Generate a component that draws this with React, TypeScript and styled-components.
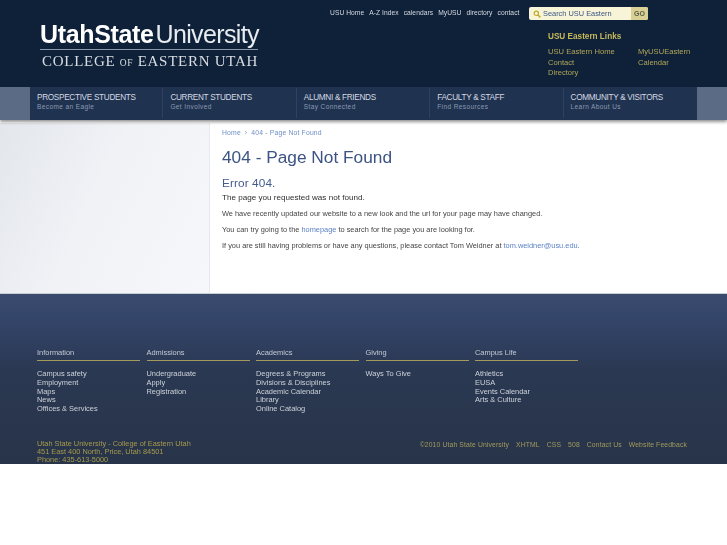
import React, { FC } from 'react';
import styled, { createGlobalStyle } from 'styled-components';

const GlobalStyle = createGlobalStyle`
  html, body { margin: 0; padding: 0; background: #fff; }
  body { font-family: "Liberation Sans", Arial, sans-serif; width: 727px; overflow: hidden; }
  #root { filter: blur(0.3px); }
  a { text-decoration: none; color: inherit; }
`;

const Header = styled.header`
  height: 87px;
  background: #0f2139;
  display: flex;
  justify-content: space-between;
`;
const Logo = styled.div`
  margin: 20px 0 0 40px;
  width: 218px;
  color: #fff;
`;
const LogoTop = styled.div`
  font-size: 25px;
  line-height: 28px;
  white-space: nowrap;
  b { font-weight: 700; letter-spacing: -0.35px; }
  span { font-weight: 400; letter-spacing: -0.65px; margin-left: 2px; color: #e8ebf0; }
`;
const LogoBottom = styled.div`
  border-top: 1px solid #8d99aa;
  margin-top: 1px;
  padding: 3px 0 0 2px;
  font-family: "Liberation Serif", serif;
  font-size: 15px;
  line-height: 17px;
  letter-spacing: 0.72px;
  color: #d9dde3;
  white-space: nowrap;
  small { font-size: 9.5px; letter-spacing: .6px; }
`;
const HeaderRight = styled.div`
  width: 397px;
  padding-top: 7px;
`;
const TopRow = styled.div`
  display: flex;
  align-items: flex-start;
`;
const TopLinks = styled.nav`
  display: flex;
  gap: 5px;
  width: 199px;
  margin-top: 1px;
  font-size: 6.7px;
  line-height: 9px;
  letter-spacing: .05px;
  color: #d4d9e0;
  white-space: nowrap;
`;
const SearchBox = styled.div`
  width: 119px;
  height: 13px;
  border-radius: 2px;
  background: #f7f4d8;
  display: flex;
  align-items: center;
  overflow: hidden;
`;
const SearchText = styled.span`
  flex: 1;
  display: flex;
  align-items: center;
  gap: 2px;
  padding-left: 4px;
  font-size: 7.4px;
  color: #3b5584;
  white-space: nowrap;
`;
const GoButton = styled.span`
  width: 17px;
  height: 13px;
  background: #d8d094;
  color: #5c5c48;
  font-size: 7px;
  font-weight: 700;
  line-height: 13px;
  text-align: center;
`;
const EasternLinks = styled.div`
  margin: 11px 0 0 218px;
  color: #b0a658;
  font-size: 7.6px;
`;
const EasternTitle = styled.div`
  font-size: 8.2px;
  font-weight: 700;
  line-height: 11px;
  color: #c7b95b;
  margin-bottom: 5px;
`;
const EasternGrid = styled.div`
  display: grid;
  grid-template-columns: 90px 60px;
  line-height: 10.7px;
  white-space: nowrap;
`;

const NavBand = styled.div`
  height: 33px;
  padding: 0 30px;
  background: #5b6b86;
  box-shadow: 0 2px 3px rgba(60, 60, 60, .55);
  position: relative;
`;
const NavInner = styled.nav`
  height: 33px;
  background: #1f3250;
  display: grid;
  grid-template-columns: repeat(5, 1fr);
`;
const NavItem = styled.a<{ $last?: boolean }>`
  padding: 4px 0 0 7px;
  border-right: ${p => (p.$last ? 'none' : '1px solid #2e4262')};
  margin: 1px 0 2px;
  white-space: nowrap;
`;
const NavTitle = styled.div`
  font-size: 8.2px;
  line-height: 11px;
  letter-spacing: -.3px;
  color: #d5dae2;
`;
const NavSub = styled.div`
  font-size: 6.5px;
  line-height: 8px;
  letter-spacing: .4px;
  color: #8c9ab0;
`;

const Content = styled.main`
  height: 173px;
  display: flex;
  background: #fff;
`;
const Sidebar = styled.aside`
  width: 209px;
  margin-top: 3px;
  border-right: 1px solid #e5e9f0;
  background: linear-gradient(115deg, #e3e6eb 0%, #f0f2f6 45%, #f5f7fa 100%);
`;
const Article = styled.article`
  padding: 8px 0 0 12px;
  flex: 1;
  color: #444;
  font-size: 7.4px;
  white-space: nowrap;
`;
const Crumbs = styled.div`
  font-size: 6.8px;
  line-height: 9px;
  letter-spacing: .18px;
  color: #6f8fc6;
  display: flex;
  gap: 4px;
`;
const PageTitle = styled.h1`
  margin: 10px 0 0;
  font-size: 17.3px;
  line-height: 21px;
  font-weight: 400;
  color: #3c5484;
`;
const ErrorTitle = styled.h2`
  margin: 8px 0 0;
  font-size: 11.8px;
  line-height: 14px;
  font-weight: 400;
  letter-spacing: .1px;
  color: #445c8a;
`;
const Lead = styled.p`
  margin: 2px 0 0;
  font-size: 8.1px;
  line-height: 11px;
  color: #2e2e2e;
`;
const Para = styled.p`
  margin: 5px 0 0;
  line-height: 11px;
  & + & { margin-top: 5px; }
`;
const TextLink = styled.a`
  color: #5c82c4;
`;

const Footer = styled.footer`
  height: 171px;
  padding: 53px 40px 0 37px;
  box-sizing: border-box;
  overflow: hidden;
  background: linear-gradient(#3a4b6e 0%, #34456a 14%, #2a3852 45%, #283449 100%);
  border-top: 1px solid #c9ced6;
`;
const Columns = styled.div`
  display: flex;
  gap: 6.5px;
  height: 93px;
`;
const Column = styled.div`
  width: 103px;
  font-size: 7.45px;
  line-height: 8.75px;
  color: #cdd2da;
  white-space: nowrap;
`;
const ColumnTitle = styled.div`
  height: 13px;
  border-bottom: 1px solid #a39a5c;
  margin-bottom: 9px;
  line-height: 11px;
  color: #c4c9d2;
`;
const ColumnLink = styled.a`
  display: block;
`;
const FooterBottom = styled.div`
  display: flex;
  justify-content: space-between;
  align-items: flex-start;
`;
const Address = styled.address`
  font-style: normal;
  font-size: 7.37px;
  line-height: 8px;
  color: #a79a4c;
  white-space: nowrap;
`;
const FooterLinks = styled.nav`
  display: flex;
  gap: 7px;
  font-size: 6.8px;
  line-height: 9px;
  letter-spacing: .13px;
  color: #a39b5c;
  white-space: nowrap;
`;

const SearchIcon: FC = () => (
  <svg width="8" height="8" viewBox="0 0 8 8" fill="none" stroke="#c4a92e">
    <circle cx="3.3" cy="3.3" r="2.2" strokeWidth="1.2" />
    <path d="M5 5l2.4 2.4" strokeWidth="1.5" />
  </svg>
);

const topLinks = ['USU Home', 'A-Z Index', 'calendars', 'MyUSU', 'directory', 'contact'];
const navItems = [
  ['PROSPECTIVE STUDENTS', 'Become an Eagle'],
  ['CURRENT STUDENTS', 'Get Involved'],
  ['ALUMNI & FRIENDS', 'Stay Connected'],
  ['FACULTY & STAFF', 'Find Resources'],
  ['COMMUNITY & VISITORS', 'Learn About Us'],
];
const columns: [string, string[]][] = [
  ['Information', ['Campus safety', 'Employment', 'Maps', 'News', 'Offices & Services']],
  ['Admissions', ['Undergraduate', 'Apply', 'Registration']],
  ['Academics', ['Degrees & Programs', 'Divisions & Disciplines', 'Academic Calendar', 'Library', 'Online Catalog']],
  ['Giving', ['Ways To Give']],
  ['Campus Life', ['Athletics', 'EUSA', 'Events Calendar', 'Arts & Culture']],
];
const footerLinks = ['©2010 Utah State University', 'XHTML', 'CSS', '508', 'Contact Us', 'Website Feedback'];

export default function App() {
  return (
    <>
      <GlobalStyle />
      <Header>
        <Logo>
          <LogoTop><b>UtahState</b><span>University</span></LogoTop>
          <LogoBottom>COLLEGE <small>OF</small> EASTERN UTAH</LogoBottom>
        </Logo>
        <HeaderRight>
          <TopRow>
            <TopLinks>
              {topLinks.map(l => <a key={l} href="#">{l}</a>)}
            </TopLinks>
            <SearchBox>
              <SearchText><SearchIcon />Search USU Eastern</SearchText>
              <GoButton>GO</GoButton>
            </SearchBox>
          </TopRow>
          <EasternLinks>
            <EasternTitle>USU Eastern Links</EasternTitle>
            <EasternGrid>
              <a href="#">USU Eastern Home</a>
              <a href="#">MyUSUEastern</a>
              <a href="#">Contact</a>
              <a href="#">Calendar</a>
              <a href="#">Directory</a>
            </EasternGrid>
          </EasternLinks>
        </HeaderRight>
      </Header>
      <NavBand>
        <NavInner>
          {navItems.map(([title, sub], i) => (
            <NavItem key={title} href="#" $last={i === navItems.length - 1}>
              <NavTitle>{title}</NavTitle>
              <NavSub>{sub}</NavSub>
            </NavItem>
          ))}
        </NavInner>
      </NavBand>
      <Content>
        <Sidebar />
        <Article>
          <Crumbs>
            <a href="#">Home</a><span>›</span><a href="#">404 - Page Not Found</a>
          </Crumbs>
          <PageTitle>404 - Page Not Found</PageTitle>
          <ErrorTitle>Error 404.</ErrorTitle>
          <Lead>The page you requested was not found.</Lead>
          <Para>We have recently updated our website to a new look and the url for your page may have changed.</Para>
          <Para>You can try going to the <TextLink href="#">homepage</TextLink> to search for the page you are looking for.</Para>
          <Para>If you are still having problems or have any questions, please contact Tom Weidner at <TextLink href="#">tom.weidner@usu.edu</TextLink>.</Para>
        </Article>
      </Content>
      <Footer>
        <Columns>
          {columns.map(([title, links]) => (
            <Column key={title}>
              <ColumnTitle>{title}</ColumnTitle>
              {links.map(l => <ColumnLink key={l} href="#">{l}</ColumnLink>)}
            </Column>
          ))}
        </Columns>
        <FooterBottom>
          <Address>
            Utah State University - College of Eastern Utah<br />
            451 East 400 North, Price, Utah 84501<br />
            Phone: 435-613-5000
          </Address>
          <FooterLinks>
            {footerLinks.map(l => <a key={l} href="#">{l}</a>)}
          </FooterLinks>
        </FooterBottom>
      </Footer>
    </>
  );
}
